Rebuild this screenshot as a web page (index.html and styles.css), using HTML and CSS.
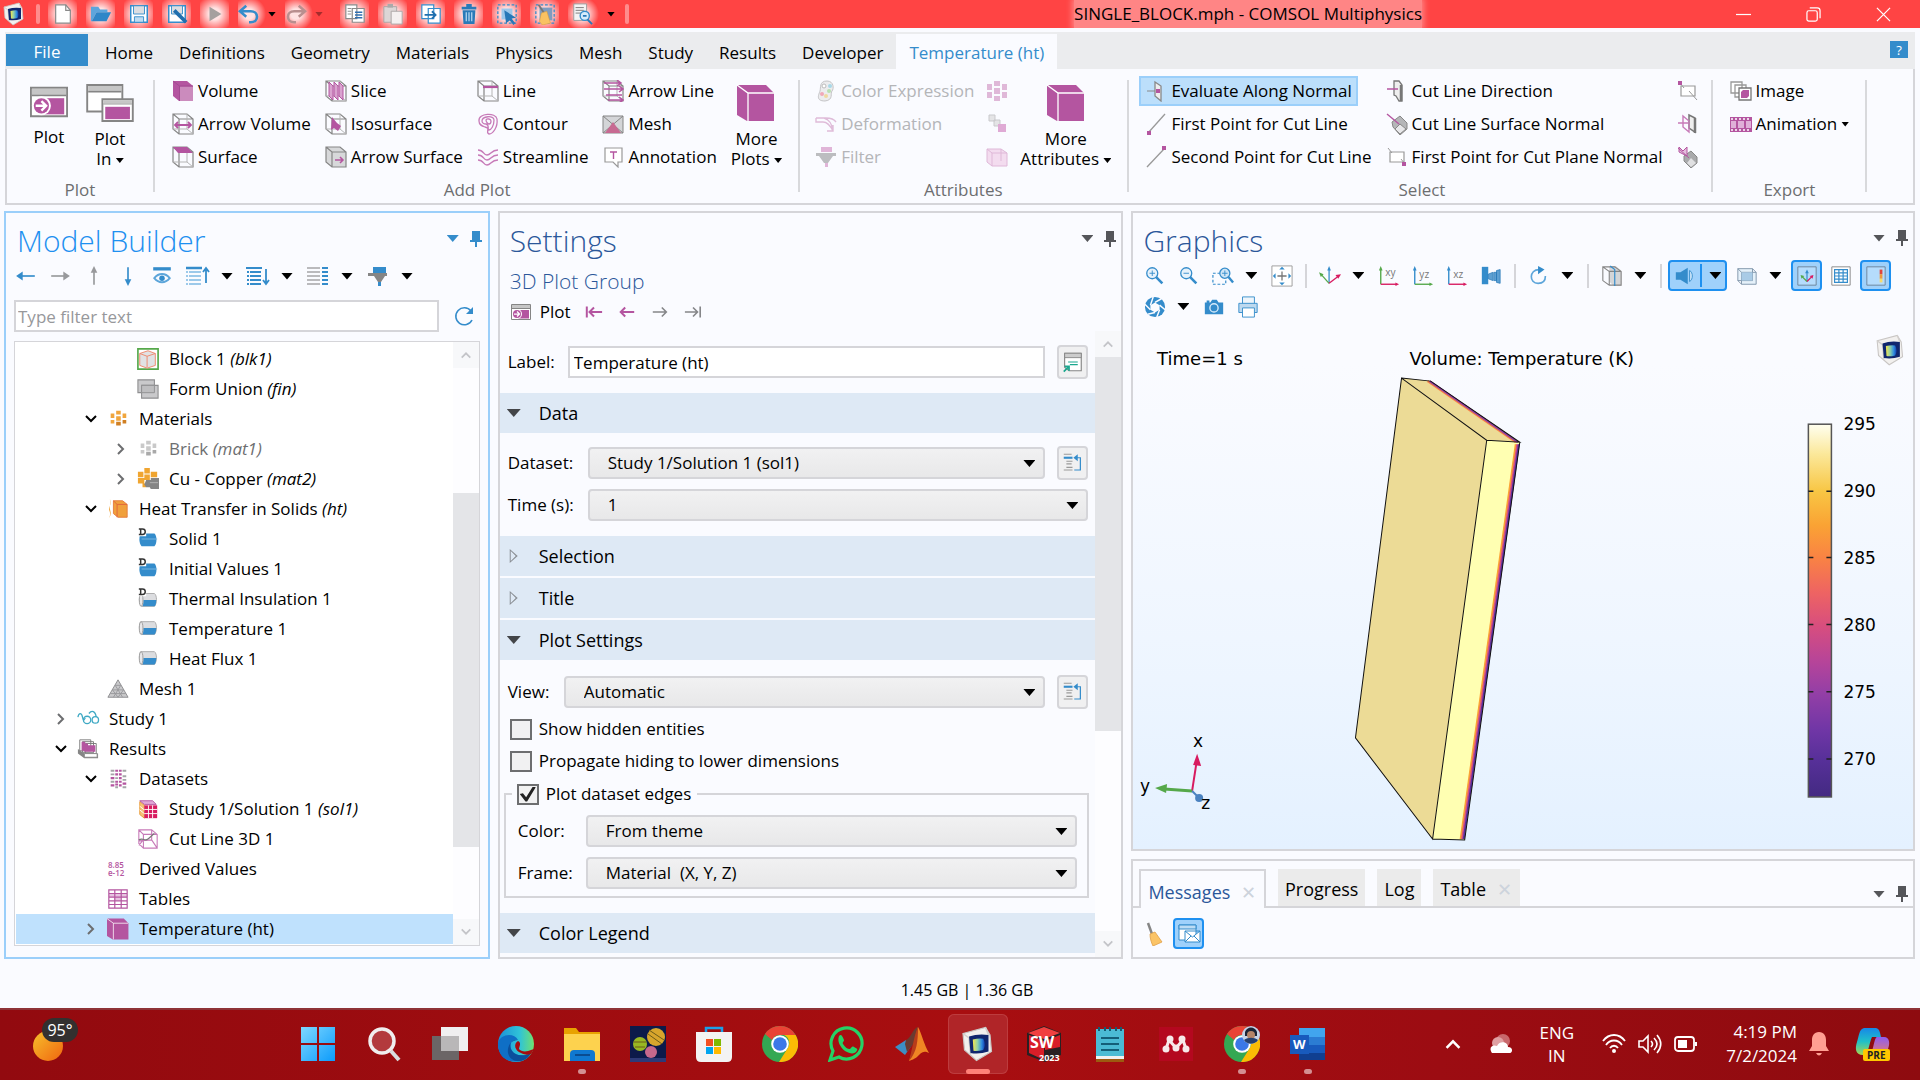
FILE: index.html
```html
<!DOCTYPE html>
<html lang="en">
<head>
    <meta charset="UTF-8">
    <meta name="viewport" content="width=device-width, initial-scale=1.0">
    <title>SINGLE_BLOCK.mph - COMSOL Multiphysics</title>
    <link rel="stylesheet" href="styles.css">
</head>
<body>
    <!-- Icon library -->
    <svg class="icon-defs" aria-hidden="true">
        <defs>
            <linearGradient id="g-screen" x1="0" y1="0" x2="1" y2="0"><stop offset="0" stop-color="#f6e64c"/><stop offset=".4" stop-color="#8fd0a8"/><stop offset=".75" stop-color="#2f8be0"/><stop offset="1" stop-color="#1240b0"/></linearGradient>
            <linearGradient id="g-win" x1="0" y1="0" x2="1" y2="1"><stop offset="0" stop-color="#7fd8ff"/><stop offset="1" stop-color="#0c9bfb"/></linearGradient>
            <linearGradient id="g-edge" x1="0" y1="0" x2="1" y2="0"><stop offset="0" stop-color="#1b8fd8"/><stop offset=".6" stop-color="#2fc3d8"/><stop offset="1" stop-color="#6fe070"/></linearGradient>
            <linearGradient id="g-sun" x1="0" y1="0" x2="1" y2="1"><stop offset="0" stop-color="#f7c02c"/><stop offset="1" stop-color="#f0660f"/></linearGradient>
            <linearGradient id="g-cop" x1="0" y1="0" x2="0" y2="1"><stop offset="0" stop-color="#1787e8"/><stop offset=".5" stop-color="#20c0c8"/><stop offset="1" stop-color="#a8d850"/></linearGradient>
            <linearGradient id="g-cop2" x1="0" y1="0" x2="0" y2="1"><stop offset="0" stop-color="#8f5cf0"/><stop offset="1" stop-color="#f08060"/></linearGradient>
        </defs>
        <symbol id="i-logo" viewBox="0 0 24 24"><path d="M2 5l15-4 3 5 1 11-10 6-8-7z" fill="#f2f0ee" stroke="#c9c6c4" stroke-width=".8"/><path d="M2 5l4 3 1 11M17 1l2 5" fill="none" stroke="#d2cfcd"/><path d="M6 7q6-2 13-1v11q-6 2-12 1z" fill="#10266e"/><path d="M8.500 9q4-1 7-.5 2 4 0 7.500-4 1-6.500.500z" fill="url(#g-screen)"/></symbol>
        <symbol id="i-new" viewBox="0 0 24 24"><path d="M4 2h11l5 6v14H4z" fill="#fff" stroke="#8a8a8a" stroke-width="1.300"/><path d="M15 2v6h5" fill="none" stroke="#8a8a8a" stroke-width="1.300"/></symbol>
        <symbol id="i-open" viewBox="0 0 24 24"><path d="M1 4h8l2 3h8v3H7l-5 10H1z" fill="#5da5dc"/><path d="M7 10h16l-5 10H2z" fill="#2f86c8"/></symbol>
        <symbol id="i-save" viewBox="0 0 24 24"><path d="M3 3h18v18H3z" fill="#fff" stroke="#348ccb" stroke-width="1.600"/><path d="M6 3h12v9H6z" fill="#dcdee2" stroke="#348ccb"/><path d="M7 15h10v6H7z" fill="#bfdcf2" stroke="#348ccb"/></symbol>
        <symbol id="i-saveas" viewBox="0 0 24 24"><path d="M3 3h18v18H3z" fill="#fff" stroke="#348ccb" stroke-width="1.600"/><path d="M6 3h12v9H6z" fill="#dcdee2" stroke="#348ccb"/><path d="M9 8l13 13" stroke="#1f6fae" stroke-width="4"/></symbol>
        <symbol id="i-run" viewBox="0 0 24 24"><path d="M6 4l13 8-13 8z" fill="#a5a09f"/></symbol>
        <symbol id="i-undo" viewBox="0 0 24 24"><path d="M9 3L2 9l7 6M3 9h11c9 0 9 12 0 12h-2" fill="none" stroke="#348ccb" stroke-width="2.800"/></symbol>
        <symbol id="i-redo" viewBox="0 0 24 24"><path d="M15 3l7 6-7 6M21 9H10c-9 0-9 12 0 12h2" fill="none" stroke="#b98f8f" stroke-width="2.800"/></symbol>
        <symbol id="i-copy" viewBox="0 0 24 24"><path d="M2 2h12v15H2zM9 6h13v15H9z" fill="#fff" stroke="#8a8a8a" stroke-width="1.300"/><path d="M4 6h4M4 9h4M4 12h4" stroke="#888"/><path d="M12 10h8M12 13h8M12 16h8" stroke="#2f6fb0" stroke-width="1.600"/></symbol>
        <symbol id="i-paste" viewBox="0 0 24 24"><path d="M2 4h14v17H2z" fill="#dcd6d6" stroke="#a9a3a3"/><path d="M6 1h6v4H6z" fill="#aaa"/><path d="M10 9h12v14H10z" fill="#f4f0f0" stroke="#a9a3a3"/></symbol>
        <symbol id="i-dup" viewBox="0 0 24 24"><path d="M2 2h13v15H2zM9 6h13v16H9z" fill="#fff" stroke="#348ccb" stroke-width="1.300"/><path d="M5 13h11M13 9l4 4-4 4" fill="none" stroke="#1f6fae" stroke-width="2"/></symbol>
        <symbol id="i-trash" viewBox="0 0 24 24"><path d="M4 4h16v3H4zM9 1h6v3H9zM5 8h14l-1 15H6z" fill="#2a7ab8"/><path d="M9 10v10M12 10v10M15 10v10" stroke="#bcdcf4" stroke-width="1.300"/></symbol>
        <symbol id="i-select" viewBox="0 0 24 24"><path d="M2 2h20v20H2z" fill="none" stroke="#348ccb" stroke-dasharray="3 2" stroke-width="1.400"/><path d="M6 6h12v12H6z" fill="#9cc7ea"/><path d="M9 8l13 8-5 1 4 5-2 2-4-5-4 3z" fill="#2878b8"/></symbol>
        <symbol id="i-clearsel" viewBox="0 0 24 24"><path d="M2 2h20v20H2z" fill="none" stroke="#348ccb" stroke-dasharray="3 2" stroke-width="1.400"/><path d="M6 5h14v14H6z" fill="#7f9cc0"/><path d="M5 2l6 9" stroke="#777" stroke-width="2"/><path d="M8 11l6-2 4 13-9 2-3-4z" fill="#f9c262" stroke="#d69a3c" stroke-width=".6"/></symbol>
        <symbol id="i-find" viewBox="0 0 24 24"><path d="M3 1h14v18H3z" fill="#f4f4f4" stroke="#999"/><path d="M5 5h9M5 8h9M5 11h6" stroke="#777"/><circle cx="15" cy="14" r="5" fill="#d6ebfb" stroke="#348ccb" stroke-width="1.500"/><path d="M13 14h4M18 18l5 5" stroke="#2878b8" stroke-width="2"/></symbol>

        <symbol id="i-plotwin" viewBox="0 0 40 32"><path d="M1 1h38v30H1z" fill="#fff" stroke="#858585" stroke-width="2"/><path d="M2 2h36v6H2z" fill="#c6c6c6"/><path d="M2 9h36" stroke="#858585" stroke-width="2"/><path d="M14 12h22v17H14z" fill="#b455a0"/><circle cx="12" cy="20" r="10" fill="#fff"/><circle cx="12" cy="20" r="8" fill="#b455a0"/><path d="M6 20h10M12 15l5 5-5 5" fill="none" stroke="#fff" stroke-width="2.500"/></symbol>
        <symbol id="i-plotin" viewBox="0 0 50 40"><path d="M1 1h37v28H1z" fill="#fff" stroke="#858585" stroke-width="2"/><path d="M2 2h35v5H2z" fill="#c6c6c6"/><path d="M2 8h35" stroke="#858585" stroke-width="2"/><path d="M17 16h32v23H17z" fill="#fff" stroke="#858585" stroke-width="2"/><path d="M18 17h30v3H18z" fill="#c6c6c6"/><path d="M18 21h30" stroke="#858585"/><path d="M20 24h26v13H20z" fill="#b455a0"/></symbol>
        <symbol id="i-bigcube" viewBox="0 0 40 38"><path d="M1 1h29l8 8v28H11L1 31z" fill="#b455a0"/><path d="M1 1l11 8h26M12 9v28" fill="none" stroke="#fff" stroke-width="1.300"/></symbol>
        <symbol id="i-volume" viewBox="0 0 22 22"><path d="M1 1h14l6 5v15H7l-6-5z" fill="#b455a0"/><path d="M8 6.500h13V21H8z" fill="#cb8bbd"/><path d="M1 1l6.500 5H21M7.500 6v15" fill="none" stroke="#a34a92"/></symbol>
        <symbol id="i-wire" viewBox="0 0 22 22"><path d="M1 1h14l6 5v15H7l-6-5zM1 1l6 5h14M7 6v15" fill="none" stroke="#858585" stroke-width="1.200"/><path d="M1 16h14l6 5M15 1v15" fill="none" stroke="#b5b5b5"/></symbol>
        <symbol id="i-arrowvol" viewBox="0 0 22 22"><use href="#i-wire"/><path d="M3 12h16M6 9l-3 3 3 3M16 9l3 3-3 3" fill="none" stroke="#b455a0" stroke-width="1.800"/></symbol>
        <symbol id="i-surface" viewBox="0 0 22 22"><use href="#i-wire"/><path d="M1 1h14l6 6H6z" fill="#b455a0"/></symbol>
        <symbol id="i-slice" viewBox="0 0 22 22"><use href="#i-wire"/><path d="M4 2l4 4v14l-4-4zM9 2l4 4v14l-4-4zM14 2l4 4v14l-4-4z" fill="#d9a3cf" stroke="#b455a0"/></symbol>
        <symbol id="i-iso" viewBox="0 0 22 22"><use href="#i-wire"/><path d="M7 4l5 6 4 3-3 5-4-3-3 2z" fill="#b455a0"/></symbol>
        <symbol id="i-arrowsurf" viewBox="0 0 22 22"><path d="M1 1h14l6 5v15H7l-6-5z" fill="#d7d8da"/><path d="M1 1h14l6 5v15H7l-6-5zM1 1l6 5h14M7 6v15" fill="none" stroke="#858585" stroke-width="1.200"/><path d="M10 14h8M15 11l3 3-3 3" fill="none" stroke="#b455a0" stroke-width="1.500"/></symbol>
        <symbol id="i-line" viewBox="0 0 22 22"><use href="#i-wire"/><path d="M6 7h15" stroke="#b455a0" stroke-width="2.200"/></symbol>
        <symbol id="i-contour" viewBox="0 0 22 22"><path d="M2 8C1 0 19-1 20 6c1 8-4 15-8 15-4-1 2-6-4-7-3-1-6-2-6-6zM5 8c0-5 12-6 12-1 0 6-3 10-5 10s1-5-3-6c-2 0-4-1-4-3zM9 7c1-2 5-1 5 1 0 3-1 3-2 3s-3-2-3-4z" fill="none" stroke="#c77ab8" stroke-width="1.300"/></symbol>
        <symbol id="i-stream" viewBox="0 0 22 22"><path d="M1 4c6 0 5 5 9 5s4-5 11-5M1 9c6 0 5 5 9 5s4-5 11-5M1 14c6 0 5 5 9 5s4-5 11-5" fill="none" stroke="#c77ab8" stroke-width="1.400"/></symbol>
        <symbol id="i-arrowline" viewBox="0 0 22 22"><use href="#i-wire"/><path d="M2 3h16M2 9h18M4 15h16M6 20h14M15 0l4 3-4 3M17 6l4 3-4 3M17 17l4 3-4 3" fill="none" stroke="#b455a0" stroke-width="1.500"/></symbol>
        <symbol id="i-meshplot" viewBox="0 0 22 22"><path d="M1 3h20v17H1z" fill="#d4d5d8" stroke="#858585"/><path d="M1 3l20 17M21 3L1 20" stroke="#858585"/><path d="M11 9L3 20h16z" fill="#c76a92"/></symbol>
        <symbol id="i-annot" viewBox="0 0 22 22"><path d="M3 2h17v14h-4v5l-5-5H3z" fill="#fff" stroke="#999" stroke-width="1.200"/><path d="M8 6h7M11.500 6v7" stroke="#b455a0" stroke-width="1.400"/></symbol>
        <symbol id="i-palette" viewBox="0 0 22 22"><path d="M12 1c7 0 7 8 5 10s2 9-7 10C0 21 4 14 5 11s-1-10 7-10z" fill="#ececee" stroke="#c4c4c6"/><circle cx="9" cy="6" r="2" fill="#fff" stroke="#bbb"/><circle cx="15" cy="6" r="2" fill="#a8d8e8"/><circle cx="14" cy="11" r="2" fill="#b8e0b0"/><circle cx="11" cy="16" r="2" fill="#f0d8a0"/><circle cx="7" cy="14" r="2" fill="#f0a8b8"/></symbol>
        <symbol id="i-deform" viewBox="0 0 22 22"><path d="M1 5h10c4 0 8 1 10 4M1 5v4h7c5 0 8 5 10 9M9 5c6 2 8 6 9 13M12 18h6v-6" fill="none" stroke="#dfbcd9" stroke-width="1.400"/></symbol>
        <symbol id="i-filter2" viewBox="0 0 22 22"><path d="M6 1h11v5H6z" fill="#e0b5d8"/><path d="M1 7h20v3h-3l-5 7H9L4 10H1z" fill="#bcbdc0"/><path d="M10 17h3v4h-3z" fill="#e0b5d8"/></symbol>
        <symbol id="i-bricks" viewBox="0 0 22 22"><path d="M1 4h5v6H1zM16 4h5v6h-5zM8 1h6v5H8zM8 8h6v6H8zM1 12h5v6H1zM16 12h5v6h-5zM8 16h6v5H8z" fill="#dfb8d8"/></symbol>
        <symbol id="i-cubes" viewBox="0 0 22 22"><path d="M3 2h6v6H3zM8 7h6v6H8z" fill="#e4e4e6" stroke="#c9c9cc"/><path d="M12 11h8v8h-8z" fill="#dfaad5"/></symbol>
        <symbol id="i-pinkbox" viewBox="0 0 22 22"><path d="M1 3h14l6 4v13H6l-5-4z" fill="#f3dcef" stroke="#dfb8d8"/><path d="M1 3l5 4h15M6 7v13M15 3v12" fill="none" stroke="#dfb8d8"/></symbol>
        <symbol id="i-evaln" viewBox="0 0 22 22"><path d="M10 2l6 4v15l-6-5z" fill="#eee" stroke="#888" stroke-width="1.300"/><path d="M2 11h8" stroke="#888"/><path d="M11 9h4v4h-4z" fill="#b455a0"/></symbol>
        <symbol id="i-first" viewBox="0 0 22 22"><path d="M3 20L20 1" stroke="#999" stroke-width="1.300"/><path d="M2 18h4v4H2z" fill="#b455a0"/></symbol>
        <symbol id="i-second" viewBox="0 0 22 22"><path d="M2 21L19 3" stroke="#999" stroke-width="1.300"/><path d="M17 0h4v4h-4z" fill="#b455a0"/></symbol>
        <symbol id="i-cutdir" viewBox="0 0 22 22"><path d="M8 1h5l3 4v16h-3l-3-5-2-1z" fill="#eee" stroke="#777" stroke-width="1.300"/><path d="M15 5v16" stroke="#777" stroke-width="2.500"/><path d="M1 9h11" stroke="#b455a0" stroke-width="1.500"/></symbol>
        <symbol id="i-cutnorm" viewBox="0 0 22 22"><path d="M6 9l8-6 7 7v6l-7 6-7-8z" fill="#b5b6b8" stroke="#888"/><path d="M14 11l6 5-6 5-5-5z" fill="#e8e8ea" stroke="#888"/><path d="M1 1l12 10" stroke="#b455a0" stroke-width="1.400"/></symbol>
        <symbol id="i-plane1" viewBox="0 0 22 22"><path d="M4 6h14v10H4z" fill="#fff" stroke="#999" stroke-width="1.200"/><path d="M2 2l4 5M15 13l4 5" stroke="#999"/><path d="M16 16h4v4h-4z" fill="#b455a0"/></symbol>
        <symbol id="i-plane2" viewBox="0 0 22 22"><path d="M4 6h14v10H4z" fill="#fff" stroke="#999" stroke-width="1.200"/><path d="M3 3l4 5M12 11l8 9" stroke="#999"/><path d="M1 1h4v4H1z" fill="#b455a0"/></symbol>
        <symbol id="i-planedir" viewBox="0 0 22 22"><path d="M12 2l6 3v14l-6-4z" fill="#eee" stroke="#777" stroke-width="1.500"/><path d="M18 5v15" stroke="#777" stroke-width="2.500"/><path d="M6 3l6 5v11l-6-5zM1 10h10" fill="none" stroke="#c77ab8" stroke-width="1.400"/></symbol>
        <symbol id="i-planenorm" viewBox="0 0 22 22"><path d="M7 10l7-5 6 6v6l-6 5-7-7z" fill="#a9aaac" stroke="#888"/><path d="M14 12l5 5-5 4-4-4z" fill="#e0e0e2"/><path d="M2 1l4 4 4-4v9L2 6zM1 2l11 10" fill="#e3bddc" stroke="#b455a0"/></symbol>
        <symbol id="i-image" viewBox="0 0 22 22"><path d="M1 2h11v11H1zM5 5h11v12H5z" fill="#fff" stroke="#999" stroke-width="1.300"/><path d="M9 8h12v12H9z" fill="#fff" stroke="#777" stroke-width="1.300"/><path d="M11 12l2-2h6v6l-2 2h-6z" fill="#b455a0"/></symbol>
        <symbol id="i-anim" viewBox="0 0 22 22"><path d="M0 4h22v15H0z" fill="#b455a0"/><path d="M1 8h5v7H1zM8 8h6v7H8zM16 8h5v7h-5z" fill="#e0b0d8"/><path d="M1 6h20M1 17h20" stroke="#fff" stroke-width="1.500" stroke-dasharray="2 2"/></symbol>

        <symbol id="i-left" viewBox="0 0 20 20"><path d="M4 10h14" stroke="currentColor" stroke-width="1.500"/><path d="M1 10l6-4v8z" fill="currentColor"/></symbol>
        <symbol id="i-right" viewBox="0 0 20 20"><path d="M2 10h14" stroke="currentColor" stroke-width="1.500"/><path d="M19 10l-6-4v8z" fill="currentColor"/></symbol>
        <symbol id="i-up" viewBox="0 0 20 20"><path d="M10 18V4" stroke="currentColor" stroke-width="1.500"/><path d="M10 1l3 6H7z" fill="currentColor"/></symbol>
        <symbol id="i-down" viewBox="0 0 20 20"><path d="M10 2v14" stroke="currentColor" stroke-width="1.500"/><path d="M10 19l3-6H7z" fill="currentColor"/></symbol>
        <symbol id="i-prev" viewBox="0 0 20 20"><path d="M3 10h15M8 5l-5 5 5 5" fill="none" stroke="currentColor" stroke-width="2.200"/></symbol>
        <symbol id="i-next" viewBox="0 0 20 20"><path d="M2 10h15M12 5l5 5-5 5" fill="none" stroke="currentColor" stroke-width="1.800"/></symbol>
        <symbol id="i-first-arr" viewBox="0 0 20 20"><path d="M2 4v12M5 10h14M10 5l-5 5 5 5" fill="none" stroke="currentColor" stroke-width="2.200"/></symbol>
        <symbol id="i-last-arr" viewBox="0 0 20 20"><path d="M18 4v12M1 10h14M10 5l5 5-5 5" fill="none" stroke="currentColor" stroke-width="1.800"/></symbol>
        <symbol id="i-eye" viewBox="0 0 20 20"><path d="M2 2h16v3H2z" fill="#348ccb"/><path d="M3 12c4-5 10-5 14 0-4 5-10 5-14 0z" fill="none" stroke="#5ca5da" stroke-width="1.800"/><circle cx="10" cy="12" r="2.500" fill="#348ccb"/></symbol>
        <symbol id="i-listup" viewBox="0 0 26 20"><path d="M1 2h16" stroke="#348ccb" stroke-width="2.500"/><path d="M4 6h12M4 10h12M4 14h12M4 18h12" stroke="#9cc9ea" stroke-width="2"/><path d="M1 6h2M1 10h2M1 14h2M1 18h2" stroke="#9cc9ea" stroke-width="2"/><path d="M21 17V2M18 6l3-4 3 4" fill="none" stroke="#348ccb" stroke-width="1.800"/></symbol>
        <symbol id="i-listdown" viewBox="0 0 26 20"><path d="M1 2h16M5 6h11M5 10h11M5 14h11M5 18h11M2 6h2M2 10h2M2 14h2M2 18h2" stroke="#348ccb" stroke-width="2"/><path d="M21 3v15M18 14l3 4 3-4" fill="none" stroke="#348ccb" stroke-width="1.800"/></symbol>
        <symbol id="i-listcols" viewBox="0 0 26 20"><path d="M2 2h13M2 6h13M2 10h13M2 14h13M2 18h13" stroke="#a5a5a8" stroke-width="1.500"/><path d="M17 2h6M17 6h6M17 10h6M17 14h6M17 18h6" stroke="#348ccb" stroke-width="2"/></symbol>
        <symbol id="i-funnel" viewBox="0 0 22 20"><path d="M6 1h13v6H6z" fill="#348ccb"/><path d="M1 7h19v3h-2l-4 6h-3l-4-6H1z" fill="#858585"/><path d="M11 16h3v4h-3z" fill="#348ccb"/></symbol>
        <symbol id="i-refresh" viewBox="0 0 22 22"><path d="M18 6a8.500 8.500 0 1 0 1 9" fill="none" stroke="#348ccb" stroke-width="1.600"/><path d="M20 2v7h-7z" fill="#348ccb"/></symbol>
        <symbol id="i-pin" viewBox="0 0 12 18"><path d="M2 1h8v9h2v2H7v5H5v-5H0v-2h2z" fill="currentColor"/></symbol>
        <symbol id="i-cv-down" viewBox="0 0 14 14"><path d="M2 4l5 5 5-5" fill="none" stroke="currentColor" stroke-width="2"/></symbol>
        <symbol id="i-cv-right" viewBox="0 0 14 14"><path d="M4 2l5 5-5 5" fill="none" stroke="currentColor" stroke-width="2"/></symbol>
        <symbol id="i-cv-up" viewBox="0 0 14 14"><path d="M2 10l5-5 5 5" fill="none" stroke="currentColor" stroke-width="2"/></symbol>

        <symbol id="i-block" viewBox="0 0 24 24"><path d="M1 1h22v22H1z" fill="#fff" stroke="#55a84a" stroke-width="1.800"/><path d="M3 6l9-3 8 3v13l-9 3-8-3z" fill="#e1e2e4" stroke="#f08468"/><path d="M3 6l8 3 9-3M11 9v12" fill="none" stroke="#f08468"/></symbol>
        <symbol id="i-union" viewBox="0 0 24 24"><path d="M1 2h18v14H1z" fill="#c9c9cb" stroke="#8f8f91" stroke-width="1.200"/><path d="M5 8h18v14H5z" fill="#c9c9cb" stroke="#8f8f91" stroke-width="1.200"/><path d="M5 8h14v8H5z" fill="#bebec0" stroke="#8f8f91"/></symbol>
        <symbol id="i-mats" viewBox="0 0 24 24"><path d="M4 6h4v5H4zM10 3h5v4h-5zM10 9h5v5h-5zM17 6h4v5h-4zM4 13h4v4H4z" fill="#f0a53c"/><path d="M10 15h5v4h-5zM17 13h4v4h-4z" fill="#d07f22"/></symbol>
        <symbol id="i-brick" viewBox="0 0 24 24"><path d="M4 6h4v5H4zM10 3h5v4h-5zM17 6h4v5h-4zM4 13h4v4H4zM10 9h5v5h-5z" fill="#c9c9c9"/><path d="M10 15h5v4h-5zM17 13h4v4h-4z" fill="#a9a9a9"/></symbol>
        <symbol id="i-copper" viewBox="0 0 24 24"><path d="M1 4h6v6H1zM8 0h6v6H8zM15 4h7v6h-7zM8 7h6v6H8zM1 11h7v6H1zM6 17h4v4H6z" fill="#f0a530"/><path d="M10 13h5v-2h9v12h-9l-1-2h-4l-2-3z" fill="#858585"/><path d="M14 16h9" stroke="#b5b5b5"/></symbol>
        <symbol id="i-heat" viewBox="0 0 24 24"><path d="M3 1c4 6-3 8 0 14 1 3 0 5-1 7 4-5 1-8 1-12 0-3 2-5 0-9z" fill="#f0a53c"/><path d="M7 3h10l5 4v14H12l-5-4z" fill="#f0a03c" stroke="#e57a3a"/><path d="M7 3l4 4h11M11 7v14" fill="none" stroke="#e0643c"/></symbol>
        <symbol id="i-dom" viewBox="0 0 24 24"><path d="M4 6h15c3 2 3 11 0 14H5C2 17 2 9 4 6z" fill="#348ccb"/><path d="M5 12h17" stroke="#7db9e2"/><path d="M1 0h9v9H1z" fill="#fff"/><path d="M2 1h4c4 0 4 6 0 6H2M4 1v6" fill="none" stroke="#333" stroke-width="1.600"/></symbol>
        <symbol id="i-bnd" viewBox="0 0 24 24"><path d="M4 4h15c3 2 3 11 0 14H5C2 15 2 7 4 4z" fill="#dcdde0" stroke="#a8a8aa"/><path d="M7 11h14c0 4-1 7-2 7H6c1-2 1-5 1-7z" fill="#348ccb"/><ellipse cx="4.500" cy="11" rx="2" ry="7" fill="#e8e8ea" stroke="#999"/></symbol>
        <symbol id="i-bndd" viewBox="0 0 24 24"><use href="#i-bnd" y="2"/><path d="M1 0h9v9H1z" fill="#fff"/><path d="M2 1h4c4 0 4 6 0 6H2M4 1v6" fill="none" stroke="#333" stroke-width="1.600"/></symbol>
        <symbol id="i-mesh" viewBox="0 0 24 24"><path d="M12 2L1 21h22z" fill="#c9c9cb" stroke="#8a8a8c"/><path d="M9 8h6M6 13h12M3.500 17h17M9 8l8 13M15 8L7 21M6 13l6 8M18 13l-6 8" fill="none" stroke="#97979a"/></symbol>
        <symbol id="i-study" viewBox="0 0 24 24"><path d="M1 10c1-5 4-5 5 0s2 3 3 1M13 6c3-4 7-3 8 4" fill="none" stroke="#3fa9c4" stroke-width="1.400"/><circle cx="11" cy="13" r="4" fill="none" stroke="#3fa9c4" stroke-width="1.400"/><circle cx="20" cy="13" r="3.500" fill="none" stroke="#3fa9c4" stroke-width="1.400"/></symbol>
        <symbol id="i-results" viewBox="0 0 24 24"><path d="M3 2h12v12H3zM6 4h12v12H6zM9 6h12v11H9z" fill="#fff" stroke="#777"/><path d="M5 4h4v10H5zM8 6h4v9H8zM11 8h9v7h-9z" fill="#b455a0"/><path d="M1 12l7 5h15v5H8l-7-5z" fill="#858585"/><path d="M8 17h14v4H8z" fill="#fff" stroke="#858585"/></symbol>
        <symbol id="i-datasets" viewBox="0 0 24 24"><path d="M4 3h4M17 3h4M4 7h4M17 9h4M4 15h4M17 13h4M9 21h3M17 21h4M9 11h3" stroke="#a5a5a8" stroke-width="2"/><path d="M9 3h3M13 3h3M9 7h3M13 7h3M4 11h4M13 11h3M9 15h3M13 15h3M4 19h4M9 18h3M13 19h3M17 17h4" stroke="#b455a0" stroke-width="2.400"/></symbol>
        <symbol id="i-solution" viewBox="0 0 24 24"><path d="M3 4l5 4v14l-5-4z" fill="#f6c27a" stroke="#e89b38"/><path d="M3 3h14l4 4H8z" fill="#e0a8d8" stroke="#b455a0"/><path d="M8 8h14v14H8z" fill="#d81b60"/><path d="M12.500 8v14M17 8v14M8 12.500h14M8 17h14M3 9l5 4M3 13l5 4" stroke="#fff"/></symbol>
        <symbol id="i-cutline" viewBox="0 0 24 24"><path d="M2 2h14l6 5v15H7l-5-5zM16 2v11M7 7v15M2 2l5 5h15M2 14l14-1 6 9M7 7l-5-5M6 14l-4 5" fill="none" stroke="#c77ab8" stroke-width="1.200"/><path d="M2 13c5-3 6 2 10-1s4-4 7-6" fill="none" stroke="#777" stroke-width="1.400"/></symbol>
        <symbol id="i-tables" viewBox="0 0 24 24"><path d="M2 2h20v20H2z" fill="#fff"/><path d="M2 6h20v4H2zM8 10h7v4H8z" fill="#e6c3e0"/><path d="M2 2h20v20H2zM2 6h20M2 10h20M2 14h20M2 18h20M8.500 2v20M15.500 2v20" fill="none" stroke="#b455a0" stroke-width="1.300"/></symbol>

        <symbol id="i-rename" viewBox="0 0 24 24"><path d="M3 2h19v20H8l-5-4z" fill="#fff" stroke="#858585" stroke-width="1.300"/><path d="M3 2h19v5H3z" fill="#ccc" stroke="#858585"/><path d="M7 12h11M9 15h9" stroke="#1aa88f" stroke-width="1.400"/><path d="M2 23l6-6M3 17h5v5" fill="none" stroke="#1aa88f" stroke-width="2"/></symbol>
        <symbol id="i-goto" viewBox="0 0 24 24"><path d="M2 2h9M5 10h7M5 13h6M2 20h10M5 17h7" stroke="#999" stroke-width="1.300"/><path d="M2 6h10" stroke="#348ccb" stroke-width="2.400"/><path d="M16 6h5v14h-7" fill="none" stroke="#348ccb" stroke-width="1.400"/><path d="M13 6l5-4v8z" fill="#348ccb"/></symbol>

        <symbol id="i-zoomin" viewBox="0 0 24 24"><circle cx="9" cy="9" r="6" fill="#e7f2fb" stroke="#348ccb" stroke-width="1.400"/><path d="M6 9h6M9 6v6" stroke="#348ccb"/><path d="M13 13l7 7" stroke="#348ccb" stroke-width="2.800"/></symbol>
        <symbol id="i-zoomout" viewBox="0 0 24 24"><circle cx="9" cy="9" r="6" fill="#e7f2fb" stroke="#348ccb" stroke-width="1.400"/><path d="M6 9h6" stroke="#348ccb"/><path d="M13 13l7 7" stroke="#348ccb" stroke-width="2.800"/></symbol>
        <symbol id="i-zoombox" viewBox="0 0 24 24"><path d="M9 9H1v12h14v-4" fill="none" stroke="#348ccb" stroke-dasharray="3 2" stroke-width="1.300"/><circle cx="14" cy="9" r="5.500" fill="#cfe5f6" stroke="#348ccb" stroke-width="1.400"/><path d="M11 9h6M14 6v6" stroke="#348ccb"/><path d="M18 13l5 6" stroke="#348ccb" stroke-width="2.600"/></symbol>
        <symbol id="i-extents" viewBox="0 0 24 24"><path d="M1 1h22v22H1z" fill="#fff" stroke="#999"/><path d="M12 7v10M7 12h10" stroke="#777" stroke-width="1.400"/><path d="M12 2l3 3H9zM12 22l3-3H9zM2 12l3-3v6zM22 12l-3-3v6z" fill="#348ccb"/></symbol>
        <symbol id="i-axes" viewBox="0 0 24 24"><path d="M11 20V4" stroke="#348ccb" stroke-width="1.400"/><path d="M11 1l2 5H9z" fill="#348ccb"/><path d="M11 20L3 11" stroke="#55a84a" stroke-width="1.400"/><path d="M0 8l5 2-3 3z" fill="#55a84a"/><path d="M11 20l9-7" stroke="#d81b60" stroke-width="1.400"/><path d="M24 10l-3 5-3-4z" fill="#d81b60"/></symbol>
        <symbol id="i-xy" viewBox="0 0 24 24"><path d="M3 21V4" stroke="#55a84a" stroke-width="1.500"/><path d="M3 1l2 5H1z" fill="#55a84a"/><path d="M3 21h17" stroke="#d81b60" stroke-width="1.500"/><path d="M23 21l-4-2v4z" fill="#d81b60"/></symbol>
        <symbol id="i-yz" viewBox="0 0 24 24"><path d="M3 21V4" stroke="#348ccb" stroke-width="1.500"/><path d="M3 1l2 5H1z" fill="#348ccb"/><path d="M3 21h17" stroke="#55a84a" stroke-width="1.500"/><path d="M23 21l-4-2v4z" fill="#55a84a"/></symbol>
        <symbol id="i-xz" viewBox="0 0 24 24"><path d="M3 21V4" stroke="#348ccb" stroke-width="1.500"/><path d="M3 1l2 5H1z" fill="#348ccb"/><path d="M3 21h17" stroke="#d81b60" stroke-width="1.500"/><path d="M23 21l-4-2v4z" fill="#d81b60"/></symbol>
        <symbol id="i-cam" viewBox="0 0 24 24"><path d="M2 2h7v19H2z" fill="#348ccb"/><path d="M9 10l5-2v9l-5-2zM15 8h3v9h-3zM18 6l4-1v15l-4-1z" fill="#5c9fd2" stroke="#2878b8" stroke-width=".8"/></symbol>
        <symbol id="i-rot" viewBox="0 0 24 24"><path d="M12 5c-11 0-11 15-1 15 5 0 8-3 8-8" fill="none" stroke="#5ca5da" stroke-width="1.800"/><path d="M11 1l7 4-7 5z" fill="#348ccb"/></symbol>
        <symbol id="i-clip" viewBox="0 0 24 24"><path d="M9 1h7l6 5v17h-8l-5-5z" fill="#d4d5d7"/><path d="M2 2h13l7 5v15H9l-7-5zM2 2l7 5h13M9 7v15" fill="none" stroke="#858585" stroke-width="1.200"/><path d="M10 1l5 4v18" fill="none" stroke="#348ccb" stroke-width="1.300"/></symbol>
        <symbol id="i-light" viewBox="0 0 24 24"><path d="M2 8h5l8-5v18l-8-5H2z" fill="#348ccb"/><path d="M17 6c4 2 4 10 0 12z" fill="#cfe7fa" stroke="#348ccb"/></symbol>
        <symbol id="i-transp" viewBox="0 0 24 24"><path d="M2 4h16v13H2zM6 8h16v13H6z" fill="#dcecf8" fill-opacity=".7" stroke="#7d93a8"/><path d="M2 4l4 4M18 4l4 4M2 17l4 4" stroke="#7d93a8"/><path d="M6 8h12v9H6z" fill="#a9cbe6"/></symbol>
        <symbol id="i-axbox" viewBox="0 0 24 24"><path d="M2 2h20v20H2z" fill="#b5dcfc" stroke="#6a8298"/><path d="M12 18V8" stroke="#348ccb" stroke-width="1.300"/><path d="M12 5l2 4h-4z" fill="#348ccb"/><path d="M12 18l-5-5" stroke="#55a84a" stroke-width="1.400"/><path d="M5 11l4 1-3 3z" fill="#55a84a"/><path d="M12 18l5-5" stroke="#d81b60" stroke-width="1.400"/><path d="M19 11l-4 1 3 3z" fill="#d81b60"/></symbol>
        <symbol id="i-grid" viewBox="0 0 24 24"><path d="M2 2h20v20H2z" fill="#fff" stroke="#858585"/><path d="M5 5h14v14H5zM9.700 5v14M14.300 5v14M5 8.500h14M5 12h14M5 15.500h14" fill="none" stroke="#348ccb" stroke-width="1.300"/></symbol>
        <symbol id="i-legend" viewBox="0 0 24 24"><path d="M2 2h20v20H2z" fill="#b5dcfc" stroke="#6a8298"/><path d="M16 5h3v5h-3z" fill="#e0453c"/><path d="M16 10h3v5h-3z" fill="#f09a3c"/><path d="M16 15h3v4h-3z" fill="#f7dc6a"/></symbol>
        <symbol id="i-shutter" viewBox="0 0 24 24"><circle cx="12" cy="12" r="11" fill="#348ccb"/><path d="M12 7l5 3v5l-5 3-5-3v-5z" fill="#fafbff"/><path d="M12 7l7-4M17 10l6 5M17 15l-3 8M12 18l-8 2M7 15L1 9M7 10l3-9" stroke="#fafbff" stroke-width="1.600"/></symbol>
        <symbol id="i-camera" viewBox="0 0 24 24"><path d="M2 7h6l2-3h5l2 3h5v13H2zM4 5h3v2H4z" fill="#348ccb"/><circle cx="12" cy="13" r="4.500" fill="#348ccb" stroke="#d6ebfb" stroke-width="1.500"/></symbol>
        <symbol id="i-print" viewBox="0 0 24 24"><path d="M6 1h13v8H6z" fill="#eef5fb" stroke="#348ccb"/><path d="M2 8h20v10H2z" fill="#bdd9ef" stroke="#348ccb"/><path d="M6 13h13v10H6z" fill="#fff" stroke="#348ccb"/></symbol>
        <symbol id="i-broom" viewBox="0 0 24 24"><path d="M6 1l4 11" stroke="#858585" stroke-width="2.500"/><path d="M8 12l5-2 7 10-9 4c-2-4-3-8-3-12z" fill="#fbc467" stroke="#e0a048" stroke-width=".8"/></symbol>
        <symbol id="i-mail" viewBox="0 0 24 24"><path d="M2 3h17v15H2z" fill="#fff" stroke="#348ccb"/><path d="M2 3h17v4H2z" fill="#bcdcf4" stroke="#348ccb"/><path d="M8 9h15v11H8zM8 9l7.500 6L23 9M8 20l6-6M23 20l-6-6" fill="#fff" stroke="#348ccb"/></symbol>

        <!-- Taskbar icons -->
        <symbol id="t-win" viewBox="0 0 36 36"><path d="M1 1h16v16H1zM19 1h16v16H19zM1 19h16v16H1zM19 19h16v16H19z" fill="url(#g-win)"/></symbol>
        <symbol id="t-search" viewBox="0 0 36 36"><circle cx="16" cy="15" r="12" fill="#b33a3d" stroke="#f0eeee" stroke-width="3.500"/><path d="M25 25l8 9" stroke="#d9dde0" stroke-width="4"/></symbol>
        <symbol id="t-views" viewBox="0 0 36 36"><path d="M0 10h27v24H0z" fill="#6b6566"/><path d="M9 1h27v24H9z" fill="#f0eff0"/><path d="M9 10h18v15H9z" fill="#b9b7b8"/></symbol>
        <symbol id="t-edge" viewBox="0 0 36 36"><circle cx="18" cy="18" r="18" fill="url(#g-edge)"/><path d="M0 17c2-9 16-11 20-3-6-1-9 4-7 9 2 7 13 8 20 4-9 14-34 11-33-10z" fill="#0f6fc6"/><path d="M20 14c-6-1-9 4-7 9 3 7 13 8 20 4-6 12-21 10-23 0-1-7 3-13 10-13z" fill="#0b4f9c"/><path d="M20 15c4 2 1 6 1 8 2 3 8 3 12 1l3-1-3 5c-4 1-6 1-10-1-6-2-8-9-3-12z" fill="#a50d10"/></symbol>
        <symbol id="t-folder" viewBox="0 0 36 36"><path d="M0 2h12l3 4h21v29H0z" fill="#e8a200"/><path d="M0 8h36v27H0z" fill="#fdd24e"/><path d="M6 35V28q0-4 4-4h17q4 0 4 4v7z" fill="#0f78d0"/><path d="M11 29h15" stroke="#0a4c90" stroke-width="2"/></symbol>
        <symbol id="t-photo" viewBox="0 0 36 36"><path d="M0 0h36v36H0z" fill="#0c1a4a"/><circle cx="26" cy="11" r="9" fill="#d8a52c"/><circle cx="10" cy="18" r="7" fill="#98b823"/><circle cx="21" cy="26" r="6" fill="#c7688c"/><path d="M18 8l14 10M19 4l15 10M4 16h12M5 21h10" stroke="#6c5a18"/><path d="M0 32h36v4H0z" fill="#2d3a78"/></symbol>
        <symbol id="t-store" viewBox="0 0 36 36"><path d="M10 7V2h16v5" fill="none" stroke="#1ba0e8" stroke-width="2.500"/><path d="M0 6h36v25q0 5-5 5H5q-5 0-5-5z" fill="#f3f3f3"/><path d="M10 13h7v7h-7z" fill="#f25022"/><path d="M18 13h7v7h-7z" fill="#7fba00"/><path d="M10 21h7v7h-7z" fill="#00a4ef"/><path d="M18 21h7v7h-7z" fill="#ffb900"/></symbol>
        <symbol id="t-chrome" viewBox="0 0 36 36"><circle cx="18" cy="18" r="18" fill="#34a853"/><path d="M18 0a18 18 0 0 1 15.600 9H18a9 9 0 0 0-8 5L3 8A18 18 0 0 1 18 0z" fill="#ea4335"/><path d="M33.600 9A18 18 0 0 1 17 36l8.500-13.500A9 9 0 0 0 22 9z" fill="#fbbc05"/><circle cx="18" cy="18" r="8.800" fill="#fff"/><circle cx="18" cy="18" r="6.800" fill="#3b78e7"/></symbol>
        <symbol id="t-wa" viewBox="0 0 36 36"><path d="M2 34l3-9A15.500 15.500 0 1 1 11 31z" fill="none" stroke="#25d366" stroke-width="3.200"/><path d="M11 10c2-2 3-1 5 4 0 2-2 2-1 4 2 3 4 5 7 5 2-2 2-3 4-2 4 2 4 2 2 5-2 2-6 2-11-1-5-4-8-10-6-15z" fill="#25d366"/></symbol>
        <symbol id="t-matlab" viewBox="0 0 36 36"><path d="M1 21l11-7 6 5-7 10z" fill="#3d8ec4"/><path d="M12 14c5-2 7-12 12-13l-4 16-7 9-2-8z" fill="#6a3a30"/><path d="M24 1c4 7 6 18 11 26-6-3-8 0-12 4-4 3-4 2-8 4 4-10 6-22 9-34z" fill="#f08524"/><path d="M24 1c-4 8-6 24-9 34 8-9 9-20 9-34z" fill="#b83c1a"/></symbol>
        <symbol id="t-sw" viewBox="0 0 36 36"><path d="M1 7L18 0l17 7v22l-16 7L1 29z" fill="#2a2022"/><path d="M2 7l16-6 16 6-16 6z" fill="#f04040"/><path d="M3 9l15 6v19L3 27zM34 9l-15 6v9l15-3z" fill="#d81e28"/></symbol>
        <symbol id="t-note" viewBox="0 0 36 36"><path d="M4 30h28v6H4z" fill="#9c5a10"/><path d="M4 3h28v28H4z" fill="#4bbbd4"/><path d="M4 30h28v3H4z" fill="#f0f0f0"/><path d="M9 12h18M9 18h18M9 24h18" stroke="#145f78" stroke-width="2.200"/><path d="M7 1v4M13 1v4M18 1v4M24 1v4M29 1v4" stroke="#165a72" stroke-width="2"/></symbol>
        <symbol id="t-mend" viewBox="0 0 36 36"><path d="M1 1h34v34H1z" fill="#b4081f"/><path d="M8 23l3-9 7 8 7-8 3 9" fill="none" stroke="#f7e8ea" stroke-width="3"/><circle cx="12" cy="13" r="3.500" fill="#f7e8ea"/><circle cx="24" cy="13" r="3.500" fill="#f7e8ea"/><circle cx="8" cy="23" r="3.500" fill="#f7e8ea"/><circle cx="18" cy="22" r="3.500" fill="#f7e8ea"/><circle cx="28" cy="23" r="3.500" fill="#f7e8ea"/></symbol>
        <symbol id="t-chromeuser" viewBox="0 0 36 36"><use href="#t-chrome"/><circle cx="27" cy="9" r="9" fill="#c6d3e8"/><path d="M21 6c2-6 10-6 12 0v4H21z" fill="#1b2436"/><circle cx="27" cy="9" r="4" fill="#b58468"/><path d="M20 14c4-3 10-3 14 0-3 5-11 5-14 0z" fill="#26406e"/></symbol>
        <symbol id="t-word" viewBox="0 0 36 36"><path d="M9 2h26v9H9z" fill="#41a5ee"/><path d="M9 11h26v8H9z" fill="#2b7cd3"/><path d="M9 19h26v8H9z" fill="#185abd"/><path d="M9 27h26v7H9z" fill="#103f91"/><path d="M0 9h19v19H0z" fill="#185abd"/></symbol>
        <symbol id="t-cloud" viewBox="0 0 24 24"><circle cx="14" cy="9" r="7" fill="#c8686b"/><circle cx="9" cy="11" r="6" fill="#dfa0a2"/><path d="M3 21c-4-6 1-9 5-7 3-6 11-4 11 1 5 0 5 5 2 6z" fill="#fff"/></symbol>
        <symbol id="t-wifi" viewBox="0 0 24 24"><path d="M1 9c6-8 16-8 22 0M4 13c4-6 12-6 16 0M8 16c2-3 6-3 8 0" fill="none" stroke="#fff" stroke-width="1.800"/><circle cx="12" cy="19" r="2" fill="#fff"/></symbol>
        <symbol id="t-vol" viewBox="0 0 24 24"><path d="M1 9h4l5-5v16l-5-5H1zM13 9c2 2 2 4 0 6M16 6c4 4 4 8 0 12M19 3c5 6 5 12 0 18" fill="none" stroke="#fff" stroke-width="1.600"/></symbol>
        <symbol id="t-bat" viewBox="0 0 24 24"><rect x="1" y="5" width="19" height="14" rx="3" fill="none" stroke="#fff" stroke-width="1.800"/><path d="M4 8h9v8H4z" fill="#fff"/><path d="M22 10v4" stroke="#fff" stroke-width="2"/></symbol>
        <symbol id="t-bell" viewBox="0 0 24 24"><path d="M12 0c5 0 7 4 7 8v6l3 5H2l3-5V8c0-4 2-8 7-8zM9 21h6q-3 5-6 0z" fill="#ff9f92"/></symbol>
        <symbol id="t-copilot" viewBox="0 0 36 36"><path d="M9 2h12c4 1 4 5 5 9h-9c-3 6-3 18-9 18C0 29 0 22 2 16 4 10 4 3 9 2z" fill="url(#g-cop)"/><path d="M22 11h7c6 0 6 7 4 12s-3 8-8 8H14c4-2 5-20 8-20z" fill="url(#g-cop2)"/><rect x="8" y="23" width="27" height="12" rx="2" fill="#ffc800"/></symbol>
    </svg>

    <header class="titlebar">
        <svg class="ico"><use href="#i-logo"/></svg>
        <span class="title-sep"></span>
        <div class="quick">
            <button aria-label="New"><svg class="ico"><use href="#i-new"/></svg></button>
            <button aria-label="Open"><svg class="ico"><use href="#i-open"/></svg></button>
            <button aria-label="Save"><svg class="ico"><use href="#i-save"/></svg></button>
            <button aria-label="Save As"><svg class="ico"><use href="#i-saveas"/></svg></button>
            <button aria-label="Run"><svg class="ico"><use href="#i-run"/></svg></button>
            <button class="split" aria-label="Undo"><svg class="ico"><use href="#i-undo"/></svg><i class="tri"></i></button>
            <button class="split" aria-label="Redo"><svg class="ico"><use href="#i-redo"/></svg><i class="tri tri-dim"></i></button>
        </div>
        <div class="quick quick-edit">
            <button aria-label="Copy"><svg class="ico"><use href="#i-copy"/></svg></button>
            <button aria-label="Paste"><svg class="ico"><use href="#i-paste"/></svg></button>
            <button aria-label="Duplicate"><svg class="ico"><use href="#i-dup"/></svg></button>
            <button aria-label="Delete"><svg class="ico"><use href="#i-trash"/></svg></button>
            <button aria-label="Select"><svg class="ico"><use href="#i-select"/></svg></button>
            <button aria-label="Clear Selection"><svg class="ico"><use href="#i-clearsel"/></svg></button>
            <button class="split" aria-label="Find"><svg class="ico"><use href="#i-find"/></svg><i class="tri"></i></button>
        </div>
        <span class="title-sep"></span>
        <span class="title-text">SINGLE_BLOCK.mph - COMSOL Multiphysics</span>
        <div class="win-controls">
            <button aria-label="Minimize"><svg viewBox="0 0 16 16"><path d="M0 8h16"/></svg></button>
            <button aria-label="Restore"><svg viewBox="0 0 16 16"><rect x="1" y="4" width="11" height="11" rx="2"/><path d="M4 1h8q3 0 3 3v8"/></svg></button>
            <button aria-label="Close"><svg viewBox="0 0 16 16"><path d="M1 1l14 14M15 1L1 15"/></svg></button>
        </div>
    </header>

    <nav class="tabs">
        <button class="tab tab-file">File</button>
        <button class="tab">Home</button>
        <button class="tab">Definitions</button>
        <button class="tab">Geometry</button>
        <button class="tab">Materials</button>
        <button class="tab">Physics</button>
        <button class="tab">Mesh</button>
        <button class="tab">Study</button>
        <button class="tab">Results</button>
        <button class="tab">Developer</button>
        <button class="tab tab-active">Temperature (ht)</button>
        <button class="help" aria-label="Help">?</button>
    </nav>

    <section class="ribbon">
        <div class="group group-plot">
            <div class="group-body">
                <button class="big"><svg class="big-plot"><use href="#i-plotwin"/></svg><span>Plot</span></button>
                <button class="big"><svg class="big-plotin"><use href="#i-plotin"/></svg><span>Plot<br>In <i class="tri"></i></span></button>
            </div>
            <div class="group-name">Plot</div>
        </div>
        <div class="group group-add">
            <div class="group-body">
                <div class="col">
                    <button class="cmd"><svg class="ico-s"><use href="#i-volume"/></svg>Volume</button>
                    <button class="cmd"><svg class="ico-s"><use href="#i-arrowvol"/></svg>Arrow Volume</button>
                    <button class="cmd"><svg class="ico-s"><use href="#i-surface"/></svg>Surface</button>
                </div>
                <div class="col">
                    <button class="cmd"><svg class="ico-s"><use href="#i-slice"/></svg>Slice</button>
                    <button class="cmd"><svg class="ico-s"><use href="#i-iso"/></svg>Isosurface</button>
                    <button class="cmd"><svg class="ico-s"><use href="#i-arrowsurf"/></svg>Arrow Surface</button>
                </div>
                <div class="col">
                    <button class="cmd"><svg class="ico-s"><use href="#i-line"/></svg>Line</button>
                    <button class="cmd"><svg class="ico-s"><use href="#i-contour"/></svg>Contour</button>
                    <button class="cmd"><svg class="ico-s"><use href="#i-stream"/></svg>Streamline</button>
                </div>
                <div class="col">
                    <button class="cmd"><svg class="ico-s"><use href="#i-arrowline"/></svg>Arrow Line</button>
                    <button class="cmd"><svg class="ico-s"><use href="#i-meshplot"/></svg>Mesh</button>
                    <button class="cmd"><svg class="ico-s"><use href="#i-annot"/></svg>Annotation</button>
                </div>
                <button class="big"><svg class="big-cube"><use href="#i-bigcube"/></svg><span>More<br>Plots <i class="tri"></i></span></button>
            </div>
            <div class="group-name">Add Plot</div>
        </div>
        <div class="group group-attr">
            <div class="group-body">
                <div class="col">
                    <button class="cmd" disabled><svg class="ico-s"><use href="#i-palette"/></svg>Color Expression</button>
                    <button class="cmd" disabled><svg class="ico-s"><use href="#i-deform"/></svg>Deformation</button>
                    <button class="cmd" disabled><svg class="ico-s"><use href="#i-filter2"/></svg>Filter</button>
                </div>
                <div class="col">
                    <button class="cmd" disabled aria-label="Material Appearance"><svg class="ico-s"><use href="#i-bricks"/></svg></button>
                    <button class="cmd" disabled aria-label="Selection"><svg class="ico-s"><use href="#i-cubes"/></svg></button>
                    <button class="cmd" disabled aria-label="Transparency"><svg class="ico-s"><use href="#i-pinkbox"/></svg></button>
                </div>
                <button class="big"><svg class="big-cube"><use href="#i-bigcube"/></svg><span>More<br>Attributes <i class="tri"></i></span></button>
            </div>
            <div class="group-name">Attributes</div>
        </div>
        <div class="group group-select">
            <div class="group-body">
                <div class="col">
                    <button class="cmd cmd-on"><svg class="ico-s"><use href="#i-evaln"/></svg>Evaluate Along Normal</button>
                    <button class="cmd"><svg class="ico-s"><use href="#i-first"/></svg>First Point for Cut Line</button>
                    <button class="cmd"><svg class="ico-s"><use href="#i-second"/></svg>Second Point for Cut Line</button>
                </div>
                <div class="col">
                    <button class="cmd"><svg class="ico-s"><use href="#i-cutdir"/></svg>Cut Line Direction</button>
                    <button class="cmd"><svg class="ico-s"><use href="#i-cutnorm"/></svg>Cut Line Surface Normal</button>
                    <button class="cmd"><svg class="ico-s"><use href="#i-plane1"/></svg>First Point for Cut Plane Normal</button>
                </div>
                <div class="col">
                    <button class="cmd" aria-label="Second Point for Cut Plane Normal"><svg class="ico-s"><use href="#i-plane2"/></svg></button>
                    <button class="cmd" aria-label="Cut Plane Direction"><svg class="ico-s"><use href="#i-planedir"/></svg></button>
                    <button class="cmd" aria-label="Cut Plane Normal"><svg class="ico-s"><use href="#i-planenorm"/></svg></button>
                </div>
            </div>
            <div class="group-name">Select</div>
        </div>
        <div class="group">
            <div class="group-body">
                <div class="col">
                    <button class="cmd"><svg class="ico-s"><use href="#i-image"/></svg>Image</button>
                    <button class="cmd"><svg class="ico-s"><use href="#i-anim"/></svg>Animation <i class="tri"></i></button>
                </div>
            </div>
            <div class="group-name">Export</div>
        </div>
    </section>

    <main class="workspace">
        <!-- Model Builder -->
        <section class="panel panel-model">
            <div class="panel-head">
                <h2>Model Builder</h2>
                <div class="panel-ctl"><i class="tri tri-lg"></i><svg class="pin"><use href="#i-pin"/></svg></div>
            </div>
            <div class="model-tools">
                <button aria-label="Back"><svg class="ico-s"><use href="#i-left"/></svg></button>
                <button class="dim" aria-label="Forward"><svg class="ico-s"><use href="#i-right"/></svg></button>
                <button class="dim" aria-label="Move Up"><svg class="ico-s"><use href="#i-up"/></svg></button>
                <button aria-label="Move Down"><svg class="ico-s"><use href="#i-down"/></svg></button>
                <button aria-label="Show"><svg class="ico-s"><use href="#i-eye"/></svg></button>
                <button class="drop" aria-label="Collapse All"><svg class="ico-w"><use href="#i-listup"/></svg><i class="tri tri-lg"></i></button>
                <button class="drop" aria-label="Expand All"><svg class="ico-w"><use href="#i-listdown"/></svg><i class="tri tri-lg"></i></button>
                <button class="drop" aria-label="Node Text"><svg class="ico-w"><use href="#i-listcols"/></svg><i class="tri tri-lg"></i></button>
                <button class="drop" aria-label="Filter"><svg class="ico-w"><use href="#i-funnel"/></svg><i class="tri tri-lg"></i></button>
            </div>
            <div class="filter-row">
                <input type="text" placeholder="Type filter text" aria-label="Filter">
                <button aria-label="Refresh"><svg class="ico-s"><use href="#i-refresh"/></svg></button>
            </div>
            <div class="tree-box">
                <ul class="tree">
                    <li class="lv2"><b></b><svg><use href="#i-block"/></svg>Block 1 <em>(blk1)</em></li>
                    <li class="lv2"><b></b><svg><use href="#i-union"/></svg>Form Union <em>(fin)</em></li>
                    <li class="lv1"><b class="open"><svg><use href="#i-cv-down"/></svg></b><svg><use href="#i-mats"/></svg>Materials</li>
                    <li class="lv2 off"><b><svg><use href="#i-cv-right"/></svg></b><svg><use href="#i-brick"/></svg>Brick <em>(mat1)</em></li>
                    <li class="lv2"><b><svg><use href="#i-cv-right"/></svg></b><svg><use href="#i-copper"/></svg>Cu - Copper <em>(mat2)</em></li>
                    <li class="lv1"><b class="open"><svg><use href="#i-cv-down"/></svg></b><svg><use href="#i-heat"/></svg>Heat Transfer in Solids <em>(ht)</em></li>
                    <li class="lv2"><b></b><svg><use href="#i-dom"/></svg>Solid 1</li>
                    <li class="lv2"><b></b><svg><use href="#i-dom"/></svg>Initial Values 1</li>
                    <li class="lv2"><b></b><svg><use href="#i-bndd"/></svg>Thermal Insulation 1</li>
                    <li class="lv2"><b></b><svg><use href="#i-bnd"/></svg>Temperature 1</li>
                    <li class="lv2"><b></b><svg><use href="#i-bnd"/></svg>Heat Flux 1</li>
                    <li class="lv1"><b></b><svg><use href="#i-mesh"/></svg>Mesh 1</li>
                    <li class="lv0"><b><svg><use href="#i-cv-right"/></svg></b><svg><use href="#i-study"/></svg>Study 1</li>
                    <li class="lv0"><b class="open"><svg><use href="#i-cv-down"/></svg></b><svg><use href="#i-results"/></svg>Results</li>
                    <li class="lv1"><b class="open"><svg><use href="#i-cv-down"/></svg></b><svg><use href="#i-datasets"/></svg>Datasets</li>
                    <li class="lv2"><b></b><svg><use href="#i-solution"/></svg>Study 1/Solution 1 <em>(sol1)</em></li>
                    <li class="lv2"><b></b><svg><use href="#i-cutline"/></svg>Cut Line 3D 1</li>
                    <li class="lv1"><b></b><span class="num-icon">8.85<br>e-12</span>Derived Values</li>
                    <li class="lv1"><b></b><svg><use href="#i-tables"/></svg>Tables</li>
                    <li class="lv1 selected"><b><svg><use href="#i-cv-right"/></svg></b><svg><use href="#i-bigcube"/></svg>Temperature (ht)</li>
                </ul>
                <div class="scroll scroll-tree">
                    <svg><use href="#i-cv-up"/></svg>
                    <div class="track"><div class="thumb"></div></div>
                    <svg><use href="#i-cv-down"/></svg>
                </div>
            </div>
        </section>

        <!-- Settings -->
        <section class="panel panel-settings">
            <div class="panel-head">
                <h2>Settings</h2>
                <div class="panel-ctl"><i class="tri tri-lg"></i><svg class="pin"><use href="#i-pin"/></svg></div>
            </div>
            <h3>3D Plot Group</h3>
            <div class="set-tools">
                <button class="set-plot"><svg><use href="#i-plotwin"/></svg>Plot</button>
                <button aria-label="Plot First"><svg><use href="#i-first-arr"/></svg></button>
                <button aria-label="Plot Previous"><svg><use href="#i-prev"/></svg></button>
                <button class="dim" aria-label="Plot Next"><svg><use href="#i-next"/></svg></button>
                <button class="dim" aria-label="Plot Last"><svg><use href="#i-last-arr"/></svg></button>
            </div>
            <div class="set-scroll">
                <div class="set-body">
                    <div class="field field-label">
                        <label for="label">Label:</label>
                        <input type="text" id="label" value="Temperature (ht)">
                        <button class="sq" aria-label="Rename"><svg class="ico"><use href="#i-rename"/></svg></button>
                    </div>
                    <h4 class="sec"><i class="tw tw-open"></i>Data</h4>
                    <div class="sec-body sec-data">
                        <div class="field field-dataset">
                            <label for="dataset">Dataset:</label>
                            <div class="sel"><select id="dataset"><option>Study 1/Solution 1 (sol1)</option></select></div>
                            <button class="sq" aria-label="Go to Source"><svg class="ico"><use href="#i-goto"/></svg></button>
                        </div>
                        <div class="field field-dataset">
                            <label for="time">Time (s):</label>
                            <div class="sel"><select id="time"><option>1</option></select></div>
                        </div>
                    </div>
                    <h4 class="sec"><i class="tw"></i>Selection</h4>
                    <h4 class="sec"><i class="tw"></i>Title</h4>
                    <h4 class="sec"><i class="tw tw-open"></i>Plot Settings</h4>
                    <div class="sec-body">
                        <div class="field field-view">
                            <label for="view">View:</label>
                            <div class="sel"><select id="view"><option>Automatic</option></select></div>
                            <button class="sq" aria-label="Go to Source"><svg class="ico"><use href="#i-goto"/></svg></button>
                        </div>
                        <label class="check"><input type="checkbox">Show hidden entities</label>
                        <label class="check"><input type="checkbox">Propagate hiding to lower dimensions</label>
                        <fieldset>
                            <legend><label class="check"><input type="checkbox" checked>Plot dataset edges</label></legend>
                            <div class="field">
                                <label for="color">Color:</label>
                                <div class="sel"><select id="color"><option>From theme</option></select></div>
                            </div>
                            <div class="field">
                                <label for="frame">Frame:</label>
                                <div class="sel"><select id="frame"><option>Material&nbsp; (X, Y, Z)</option></select></div>
                            </div>
                        </fieldset>
                    </div>
                    <h4 class="sec"><i class="tw tw-open"></i>Color Legend</h4>
                </div>
                <div class="scroll scroll-set">
                    <svg><use href="#i-cv-up"/></svg>
                    <div class="track"><div class="thumb"></div></div>
                    <svg><use href="#i-cv-down"/></svg>
                </div>
            </div>
        </section>

        <div class="right-col">
            <!-- Graphics -->
            <section class="panel panel-graphics">
                <div class="panel-head">
                    <h2>Graphics</h2>
                    <div class="panel-ctl"><i class="tri tri-lg"></i><svg class="pin"><use href="#i-pin"/></svg></div>
                </div>
                <div class="gfx-tools">
                    <button aria-label="Zoom In"><svg class="ico"><use href="#i-zoomin"/></svg></button>
                    <button aria-label="Zoom Out"><svg class="ico"><use href="#i-zoomout"/></svg></button>
                    <button aria-label="Zoom Box"><svg class="ico"><use href="#i-zoombox"/></svg></button>
                    <button class="dd" aria-label="Zoom options"><i class="tri tri-lg"></i></button>
                    <button aria-label="Zoom Extents"><svg class="ico"><use href="#i-extents"/></svg></button>
                    <span class="bar"></span>
                    <button aria-label="Default View"><svg class="ico"><use href="#i-axes"/></svg></button>
                    <button class="dd" aria-label="View options"><i class="tri tri-lg"></i></button>
                    <button aria-label="XY View"><svg class="ico" viewBox="0 0 24 24"><use href="#i-xy"/><text class="axis-text" x="8" y="12">xy</text></svg></button>
                    <button aria-label="YZ View"><svg class="ico" viewBox="0 0 24 24"><use href="#i-yz"/><text class="axis-text" x="8" y="14">yz</text></svg></button>
                    <button aria-label="XZ View"><svg class="ico" viewBox="0 0 24 24"><use href="#i-xz"/><text class="axis-text" x="8" y="14">xz</text></svg></button>
                    <button aria-label="Camera"><svg class="ico"><use href="#i-cam"/></svg></button>
                    <span class="bar"></span>
                    <button aria-label="Rotate"><svg class="ico"><use href="#i-rot"/></svg></button>
                    <button class="dd" aria-label="Rotate options"><i class="tri tri-lg"></i></button>
                    <span class="bar"></span>
                    <button aria-label="Clipping"><svg class="ico"><use href="#i-clip"/></svg></button>
                    <button class="dd" aria-label="Clipping options"><i class="tri tri-lg"></i></button>
                    <span class="bar"></span>
                    <button class="on on-split" aria-label="Scene Light"><svg class="ico"><use href="#i-light"/></svg><span><i class="tri tri-lg"></i></span></button>
                    <button aria-label="Transparency"><svg class="ico"><use href="#i-transp"/></svg></button>
                    <button class="dd" aria-label="Transparency options"><i class="tri tri-lg"></i></button>
                    <button class="on" aria-label="Show Axis"><svg class="ico"><use href="#i-axbox"/></svg></button>
                    <button aria-label="Show Grid"><svg class="ico"><use href="#i-grid"/></svg></button>
                    <button class="on" aria-label="Show Legends"><svg class="ico"><use href="#i-legend"/></svg></button>
                </div>
                <div class="gfx-tools gfx-tools-2">
                    <button aria-label="Environment"><svg class="ico"><use href="#i-shutter"/></svg></button>
                    <button class="dd" aria-label="Environment options"><i class="tri tri-lg"></i></button>
                    <button aria-label="Image Snapshot"><svg class="ico"><use href="#i-camera"/></svg></button>
                    <button aria-label="Print"><svg class="ico"><use href="#i-print"/></svg></button>
                </div>
                <div class="canvas">
                    <svg class="plot" viewBox="0 0 778 526" role="img" aria-label="Volume: Temperature (K)">
                        <defs>
                            <linearGradient id="thermal" x1="0" y1="0" x2="0" y2="1">
                                <stop offset="0" stop-color="#fffff0"/>
                                <stop offset=".08" stop-color="#fbe89a"/>
                                <stop offset=".18" stop-color="#f8c644"/>
                                <stop offset=".27" stop-color="#faa334"/>
                                <stop offset=".36" stop-color="#f98244"/>
                                <stop offset=".45" stop-color="#ee6462"/>
                                <stop offset=".54" stop-color="#d84e7e"/>
                                <stop offset=".64" stop-color="#b5449a"/>
                                <stop offset=".72" stop-color="#943fa6"/>
                                <stop offset=".82" stop-color="#7036a6"/>
                                <stop offset=".9" stop-color="#573099"/>
                                <stop offset="1" stop-color="#432a82"/>
                            </linearGradient>
                        </defs>
                        <g transform="translate(0 4)">
                            <!-- block faces -->
                            <path d="M268 52L222 411l77 101 54-398z" fill="#ecdb96"/>
                            <path d="M268 52l29 3 89 61-33-2z" fill="#ecdb96"/>
                            <path d="M353 114l33 2-55 397-32-1z" fill="#ffffb2"/>
                            <!-- cold side -->
                            <path d="M294 55l88 61" fill="none" stroke="#f98244" stroke-width="2"/>
                            <path d="M296 55l88 61" fill="none" stroke="#8f3fa0" stroke-width="2"/>
                            <path d="M382 118L327 512" fill="none" stroke="#faa334" stroke-width="2"/>
                            <path d="M383.500 118L328.500 512" fill="none" stroke="#d84e7e" stroke-width="2"/>
                            <path d="M385 118L330 512" fill="none" stroke="#5a2f9c" stroke-width="2"/>
                            <path d="M268 52L222 411l77 101 54-398zM268 52l29 3 89 61-33-2M386 116l-55 397-32-1" fill="none" stroke="#111"/>
                            <!-- axes -->
                            <path d="M59 464l4-26" stroke="#d81b60" stroke-width="2"/>
                            <path d="M64 427l4 12-8-1z" fill="#d81b60"/>
                            <path d="M59 464l-28-2" stroke="#55a84a" stroke-width="3"/>
                            <path d="M22 461l12-4-1 9z" fill="#55a84a"/>
                            <path d="M59 464l5 5" stroke="#4a82c0" stroke-width="2"/>
                            <circle cx="66" cy="471" r="4" fill="#4a82c0"/>
                            <g class="plot-text">
                                <text x="60" y="420">x</text>
                                <text x="7" y="465">y</text>
                                <text x="68" y="482">z</text>
                                <text class="plot-title" x="24" y="39">Time=1 s</text>
                                <text class="plot-title" x="276" y="39">Volume: Temperature (K)</text>
                                <text x="709" y="104">295</text>
                                <text x="709" y="171">290</text>
                                <text x="709" y="238">285</text>
                                <text x="709" y="304">280</text>
                                <text x="709" y="371">275</text>
                                <text x="709" y="438">270</text>
                            </g>
                            <!-- colour bar -->
                            <rect x="674" y="98" width="23" height="372" fill="url(#thermal)" stroke="#555" stroke-width="1.500"/>
                            <path d="M674 165h5M692 165h5M674 231h5M692 231h5M674 298h5M692 298h5M674 365h5M692 365h5M674 432h5M692 432h5" stroke="#222" stroke-width="1.500"/>
                            <use href="#i-logo" x="740" y="8" width="32" height="32"/>
                        </g>
                    </svg>
                </div>
            </section>

            <!-- Messages -->
            <section class="panel panel-msg">
                <div class="msg-tabs">
                    <button class="msg-tab msg-on">Messages <span class="x">✕</span></button>
                    <button class="msg-tab">Progress</button>
                    <button class="msg-tab">Log</button>
                    <button class="msg-tab">Table <span class="x">✕</span></button>
                    <div class="panel-ctl"><i class="tri tri-lg"></i><svg class="pin"><use href="#i-pin"/></svg></div>
                </div>
                <div class="msg-tools">
                    <button aria-label="Clear"><svg class="ico"><use href="#i-broom"/></svg></button>
                    <button class="on" aria-label="Scroll lock"><svg class="ico"><use href="#i-mail"/></svg></button>
                </div>
            </section>
        </div>
    </main>

    <div class="status">1.45 GB | 1.36 GB</div>

    <footer class="taskbar">
        <div class="weather"><svg viewBox="0 0 48 44"><circle cx="16" cy="27" r="15" fill="url(#g-sun)"/></svg><span>95°</span></div>
        <div class="apps">
            <button aria-label="Start"><svg><use href="#t-win"/></svg></button>
            <button aria-label="Search"><svg><use href="#t-search"/></svg></button>
            <button aria-label="Task View"><svg><use href="#t-views"/></svg></button>
            <button aria-label="Edge"><svg><use href="#t-edge"/></svg></button>
            <button class="running" aria-label="File Explorer"><svg><use href="#t-folder"/></svg></button>
            <button aria-label="Photos"><svg><use href="#t-photo"/></svg></button>
            <button aria-label="Store"><svg><use href="#t-store"/></svg></button>
            <button aria-label="Chrome"><svg><use href="#t-chrome"/></svg></button>
            <button aria-label="WhatsApp"><svg><use href="#t-wa"/></svg></button>
            <button aria-label="MATLAB"><svg><use href="#t-matlab"/></svg></button>
            <button class="running current" aria-label="COMSOL"><svg><use href="#i-logo"/></svg></button>
            <button aria-label="SolidWorks"><svg viewBox="0 0 36 36"><use href="#t-sw"/><text class="sw-name" x="4" y="22">SW</text><text class="sw-year" x="13" y="35">2023</text></svg></button>
            <button aria-label="Notepad"><svg><use href="#t-note"/></svg></button>
            <button aria-label="Mendeley"><svg><use href="#t-mend"/></svg></button>
            <button class="running" aria-label="Chrome profile"><svg><use href="#t-chromeuser"/></svg></button>
            <button class="running" aria-label="Word"><svg viewBox="0 0 36 36"><use href="#t-word"/><text class="word-w" x="3" y="23">W</text></svg></button>
        </div>
        <div class="tray">
            <svg class="tray-cv"><use href="#i-cv-up"/></svg>
            <svg class="ico tray-cloud"><use href="#t-cloud"/></svg>
            <div class="lang">ENG<br>IN</div>
            <div class="net">
                <svg class="ico"><use href="#t-wifi"/></svg>
                <svg class="ico"><use href="#t-vol"/></svg>
                <svg class="ico"><use href="#t-bat"/></svg>
            </div>
            <div class="clock">4:19 PM<br>7/2/2024</div>
            <svg class="ico"><use href="#t-bell"/></svg>
            <svg class="copilot" viewBox="0 0 36 36"><use href="#t-copilot"/><text class="pre" x="12" y="33">PRE</text></svg>
        </div>
    </footer>
</body>
</html>
```

FILE: styles.css
```css
* {
    box-sizing: border-box;
}
body {
    margin: 0;
    min-height: 100vh;
    display: flex;
    flex-direction: column;
    background: #fafbff;
    color: #000;
    font-family: "Open Sans", "Noto Sans", sans-serif;
    font-size: 17px;
    line-height: 20px;
}
button {
    margin: 0;
    padding: 0;
    border: 0;
    background: none;
    color: inherit;
    font: inherit;
    cursor: pointer;
}
svg {
    display: block;
    flex: none;
}
h2, h3, h4, ul {
    margin: 0;
    padding: 0;
    font-weight: normal;
}
.icon-defs {
    position: absolute;
    width: 0;
    height: 0;
}
.ico {
    width: 24px;
    height: 24px;
}
.ico-s {
    width: 22px;
    height: 22px;
}
.ico-w {
    width: 26px;
    height: 20px;
}

/* Down arrow */
.tri {
    display: inline-block;
    flex: none;
    width: 8px;
    height: 5px;
    vertical-align: middle;
    background: currentColor;
    clip-path: polygon(0 0, 100% 0, 50% 100%);
}
.tri-lg {
    width: 12px;
    height: 7px;
}
.tri-dim {
    opacity: .35;
}

/* Title bar */
.titlebar {
    display: flex;
    align-items: center;
    height: 28px;
    padding-left: 2px;
    background: #ff4444;
}
.title-sep {
    width: 4px;
    height: 20px;
    margin: 0 8px 0 10px;
    border-radius: 2px;
    background: #ff8c8c;
}
.quick {
    display: flex;
    gap: 9px;
}
.quick-edit {
    margin-left: 17px;
}
.quick button {
    display: flex;
    align-items: center;
    justify-content: center;
    min-width: 29px;
    height: 28px;
    background: radial-gradient(circle 19px, rgba(255, 255, 255, .85) 30%, rgba(255, 255, 255, 0));
}
.quick .ico {
    width: 22px;
    height: 22px;
}
.quick .split {
    gap: 8px;
    background: radial-gradient(circle 17px at 11px 14px, rgba(255, 255, 255, .85) 30%, rgba(255, 255, 255, 0));
}
.quick-edit .split {
    gap: 14px;
    padding-left: 3px;
    background: radial-gradient(circle 17px at 14px 14px, rgba(255, 255, 255, .85) 30%, rgba(255, 255, 255, 0));
}
.title-text {
    margin-left: auto;
    margin-right: 286px;
    line-height: 28px;
    background: rgba(255, 255, 255, .35);
    box-shadow: 0 0 6px 2px rgba(255, 255, 255, .35);
}
.win-controls {
    display: flex;
    margin-right: 2px;
}
.win-controls button {
    width: 70px;
    height: 28px;
}
.win-controls svg {
    width: 15px;
    height: 15px;
    margin: 0 auto;
    fill: none;
    stroke: #fff;
    stroke-width: 1.3;
}

/* Ribbon tabs */
.tabs {
    display: flex;
    margin: 4px 5px 0;
    height: 37px;
    padding: 2px 7px 0 1px;
    background: #ebecee;
}
.tab {
    padding: 2px 13px 0;
    height: 35px;
}
.tab-file {
    width: 82px;
    height: 32px;
    padding-top: 4px;
    margin-right: 4px;
    background: #348ccb;
    color: #fff;
}
.tab-active {
    background: #fafbff;
    color: #348ccb;
}
.help {
    width: 18px;
    height: 17px;
    margin: 7px 0 0 auto;
    background: #348ccb;
    color: #fff;
    font-size: 13px;
    line-height: 16px;
}

/* Ribbon */
.ribbon {
    display: flex;
    margin: 0 5px;
    height: 136px;
    padding: 7px 0 0 2px;
    border: 2px solid #d5d5d9;
    border-top: 0;
}
.group {
    position: relative;
    display: flex;
    flex-direction: column;
    padding: 0 18px 0 17px;
}
.group::after {
    content: "";
    position: absolute;
    right: 0;
    top: 4px;
    width: 2px;
    height: 112px;
    background: #d8d9dc;
}
.group-plot {
    padding: 0 21px 0 17px;
}
.group-attr {
    padding-left: 15px;
}
.group-select {
    padding: 0 8px 0 10px;
}
.group-body {
    display: flex;
    gap: 14px;
    height: 104px;
}
.group-attr .group-body {
    gap: 12px;
}
.group-select .group-body {
    gap: 2px;
}
.group-name {
    text-align: center;
    color: #6d6e70;
}
.col {
    display: flex;
    flex-direction: column;
    align-items: flex-start;
    gap: 3px;
}
.cmd {
    display: flex;
    align-items: center;
    gap: 4px;
    height: 30px;
    white-space: nowrap;
}
.group-select .cmd {
    padding: 0 6px;
}
.cmd-on {
    background: #bcdffb;
    box-shadow: inset 0 0 0 2px #9bcffa;
}
.cmd:disabled {
    color: #b4b5b8;
}
.big {
    display: flex;
    flex-direction: column;
    align-items: center;
    gap: 7px;
    min-width: 46px;
    padding-top: 8px;
}
.big-plot {
    width: 38px;
    height: 36px;
}
.big-plotin {
    width: 48px;
    height: 38px;
}
.big-cube {
    width: 40px;
    height: 38px;
}

/* Workspace */
.workspace {
    flex: 1;
    display: grid;
    grid-template-columns: 486fr 626fr 784fr;
    gap: 8px;
    padding: 6px 5px 0 4px;
}
.panel {
    display: flex;
    flex-direction: column;
    min-width: 0;
    border: 2px solid #d5d5d9;
    background: #fafbff;
}
.panel-model {
    border-color: #9bcffa;
    padding: 0 8px 11px;
}
.panel-head {
    display: flex;
    justify-content: space-between;
    align-items: center;
    height: 50px;
    padding: 6px 5px 0 10px;
}
.panel-model .panel-head {
    padding: 6px 0 0 3px;
}
.panel-graphics .panel-head {
    height: 47px;
    padding-top: 8px;
}
h2 {
    font-size: 30px;
    font-weight: 300;
    line-height: 40px;
    color: #2b579a;
}
.panel-model h2 {
    color: #1e90f0;
}
.panel-ctl {
    display: flex;
    align-items: center;
    gap: 11px;
    padding-bottom: 5px;
    color: #55565a;
}
.panel-model .panel-ctl {
    color: #348ccb;
    margin-right: -2px;
}
.pin {
    width: 12px;
    height: 18px;
}

/* Model Builder */
.model-tools {
    display: flex;
    align-items: center;
    gap: 12px;
    height: 26px;
    padding-left: 1px;
    color: #348ccb;
}
.model-tools .dim {
    color: #98999c;
}
.model-tools .drop {
    display: flex;
    align-items: center;
    gap: 10px;
}
.drop .tri {
    background: #000;
}
.filter-row {
    display: flex;
    align-items: center;
    gap: 14px;
    margin: 11px 0 9px;
    padding-right: 5px;
}
input[type="text"] {
    flex: 1;
    min-width: 0;
    height: 32px;
    padding: 0 2px;
    border: 2px solid #d5d5d9;
    background: #fff;
    font: inherit;
}
input::placeholder {
    color: #97989b;
    opacity: 1;
}
.tree-box {
    flex: 1;
    display: flex;
    border: 1px solid #d5d5d9;
    background: #fff;
}
.tree {
    flex: 1;
    list-style: none;
    padding: 2px 0 1px 1px;
}
.tree li {
    display: flex;
    align-items: center;
    height: 30px;
    white-space: pre;
}
.tree li > svg {
    width: 24px;
    height: 22px;
    margin: 0 9px 0 6px;
}
.tree b {
    width: 20px;
    height: 14px;
    padding-left: 3px;
    color: #6d6e70;
}
.tree b svg {
    width: 16px;
    height: 14px;
}
.tree .open {
    color: #000;
}
.lv0 { padding-left: 34px; }
.lv1 { padding-left: 64px; }
.lv2 { padding-left: 94px; }
.tree .off {
    color: #6d6e70;
}
.tree .selected {
    background: #bfe1fd;
}
.num-icon {
    width: 32px;
    margin-right: 7px;
    padding-left: 8px;
    font-size: 8px;
    font-weight: 600;
    line-height: 8px;
    color: #b455a0;
    white-space: nowrap;
}

/* Scroll bars */
.scroll {
    display: flex;
    flex-direction: column;
    width: 26px;
    background: #f7f8fa;
    color: #c3c4c8;
}
.scroll svg {
    width: 12px;
    height: 26px;
    margin: 0 auto;
}
.track {
    flex: 1;
    display: flex;
    flex-direction: column;
    background: #fdfdff;
}
.thumb {
    background: #e4e5e8;
}
.scroll-tree .thumb {
    margin-top: 125px;
    height: 354px;
}
.scroll-set .thumb {
    height: 374px;
}

/* Settings */
h3 {
    padding-left: 10px;
    font-size: 21px;
    line-height: 32px;
    font-weight: 300;
    color: #2b579a;
    margin-top: 2px;
}
.set-tools {
    display: flex;
    align-items: center;
    gap: 13px;
    height: 34px;
    padding: 0 0 4px 11px;
    color: #b455a0;
}
.set-tools .dim {
    color: #858689;
}
.set-tools svg {
    width: 20px;
    height: 18px;
}
.set-plot {
    display: flex;
    align-items: center;
    gap: 9px;
    color: #000;
}
.set-scroll {
    flex: 1;
    display: flex;
}
.set-body {
    flex: 1;
    min-width: 0;
}
.field {
    display: flex;
    align-items: center;
    min-height: 32px;
}
.field-label {
    margin: 14px 7px 14px 8px;
}
.field-label label {
    width: 60px;
}
.field-label input {
    padding: 0 4px;
}
.sq {
    display: flex;
    align-items: center;
    justify-content: center;
    width: 31px;
    height: 34px;
    margin-left: 12px;
    border: 2px solid #d5d5d9;
    border-radius: 4px;
    background: #f0f0f1;
}
.sq .ico {
    width: 21px;
    height: 22px;
}
.sec {
    display: flex;
    align-items: center;
    gap: 18px;
    height: 40px;
    margin-bottom: 2px;
    padding-left: 7px;
    background: #dee9f5;
    font-size: 18px;
}
.tw {
    width: 14px;
    height: 14px;
    background: #8b8f95;
    clip-path: polygon(3px 0, 11px 50%, 3px 100%, 3px 0, 4px 2px, 4px 12px, 9px 50%, 4px 2px);
}
.tw-open {
    height: 8px;
    background: #434548;
    clip-path: polygon(0 0, 100% 0, 50% 100%);
}
.sec-body {
    padding: 13px 7px 15px 8px;
}
.sec-data {
    padding: 11px 7px 15px 8px;
}
.field-dataset label {
    width: 80px;
}
.field-dataset + .field-dataset {
    margin-top: 9px;
}
.field-view label {
    width: 56px;
}
.sel {
    position: relative;
    flex: 1;
}
.sel::after {
    content: "";
    position: absolute;
    right: 10px;
    top: 13px;
    width: 12px;
    height: 7px;
    background: #000;
    clip-path: polygon(0 0, 100% 0, 50% 100%);
    pointer-events: none;
}
select {
    display: block;
    width: 100%;
    height: 32px;
    padding: 0 18px;
    border: 2px solid #d5d5d9;
    border-radius: 4px;
    background: linear-gradient(#f1f1f2, #e8e8e9);
    color: #000;
    font: inherit;
    appearance: none;
}
.check {
    display: flex;
    align-items: center;
    gap: 7px;
    height: 32px;
    padding-left: 2px;
}
.field-view {
    margin-bottom: 4px;
}
.check input {
    display: grid;
    place-items: center;
    width: 22px;
    height: 21px;
    margin: 0;
    border: 2px solid #6d6e70;
    background: #f1f1f2;
    appearance: none;
}
.check input:checked::after {
    content: "";
    width: 16px;
    height: 15px;
    background: #222;
    clip-path: polygon(0 50%, 20% 45%, 40% 72%, 82% 0, 100% 5%, 46% 100%, 36% 100%);
}
fieldset {
    margin: 5px -1px 0 -4px;
    padding: 9px 10px 7px 12px;
    border: 2px solid #d5d5d9;
}
legend {
    margin-left: -6px;
    padding: 0 6px 0 3px;
}
legend .check {
    height: 24px;
}
fieldset .field label {
    width: 68px;
}
fieldset .field + .field {
    margin-top: 10px;
}

/* Graphics */
.right-col {
    display: flex;
    flex-direction: column;
    gap: 8px;
    min-width: 0;
}
.panel-graphics {
    flex: 1;
}
.gfx-tools {
    display: flex;
    align-items: center;
    height: 31px;
    padding-left: 5px;
}
.gfx-tools button,
.msg-tools button {
    display: flex;
    align-items: center;
    justify-content: center;
    flex: none;
    width: 34px;
    height: 31px;
}
.gfx-tools .ico {
    width: 22px;
    height: 22px;
}
.gfx-tools .dd {
    width: 25px;
    padding-right: 3px;
}
.bar {
    width: 2px;
    height: 24px;
    margin: 0 6px;
    background: #d5d5d9;
}
.axis-text {
    font-size: 11px;
    fill: #777;
}
.gfx-tools .on,
.msg-tools .on {
    width: 31px;
    margin: 0 2px;
    border: 2px solid #1e90f0;
    border-radius: 4px;
    background: #9fd1fb;
}
.gfx-tools .on-split {
    width: 59px;
    margin: 0 3px 0 0;
    gap: 4px;
}
.on-split span {
    display: flex;
    align-items: center;
    height: 23px;
    padding-left: 7px;
    border-left: 2px solid #1e90f0;
}
.canvas {
    flex: 1;
    min-height: 0;
    background: linear-gradient(#fafbff 8%, #eff6ff 60%, #e4f1ff);
}
.plot {
    width: 100%;
    height: 100%;
}
.plot-text {
    font-family: "DejaVu Sans", sans-serif;
    font-size: 17px;
}
.plot-title {
    font-size: 18px;
}

/* Messages */
.msg-tabs {
    display: flex;
    align-items: flex-end;
    gap: 12px;
    height: 47px;
    padding-left: 6px;
    border-bottom: 2px solid #d5d5d9;
}
.msg-tabs .panel-ctl {
    margin: 0 5px 0 auto;
    padding-bottom: 3px;
}
.msg-tab {
    height: 37px;
    padding: 2px 7px 0;
    background: #ebebeb;
    font-size: 18px;
}
.msg-on {
    height: 39px;
    margin-bottom: -2px;
    padding-top: 4px;
    border: 2px solid #d5d5d9;
    border-bottom: 0;
    background: #fafbff;
    color: #2b579a;
}
.x {
    margin: 0 1px 0 6px;
    font-size: 18px;
    line-height: 18px;
    color: #cdd3dc;
}
.msg-tools {
    display: flex;
    height: 49px;
    padding: 10px 0 0 4px;
}
.status {
    height: 49px;
    padding: 21px 0 0 14px;
    text-align: center;
    font-size: 16px;
}

/* Taskbar */
.taskbar {
    display: flex;
    height: 72px;
    border-top: 2px solid #8e3237;
    background: linear-gradient(90deg, #920a0f, #a80e10 50%, #9c0c12 75%, #8e0b0f);
    color: #fff;
}
.weather {
    position: relative;
    flex: 1 1 285px;
    padding: 9px 0 0 32px;
}
.weather svg {
    width: 48px;
    height: 44px;
}
.weather span {
    position: absolute;
    left: 42px;
    top: 8px;
    width: 36px;
    height: 24px;
    border-radius: 12px;
    background: #33302f;
    font-size: 16px;
    line-height: 24px;
    text-align: center;
}
.apps {
    display: flex;
    gap: 6px;
    padding-top: 4px;
}
.apps button {
    position: relative;
    width: 60px;
    height: 60px;
    border-radius: 6px;
}
.apps svg {
    width: 36px;
    height: 36px;
    margin: 0 auto;
}
.apps .running::after {
    content: "";
    position: absolute;
    left: 26px;
    bottom: 0;
    width: 8px;
    height: 5px;
    border-radius: 3px;
    background: #d48f92;
}
.apps .current {
    background: #b02528;
    box-shadow: inset 0 0 0 1px #bd3c3e;
}
.apps .current::after {
    left: 18px;
    width: 24px;
    background: #ff8078;
}
.sw-name,
.sw-year,
.word-w,
.pre {
    font-weight: bold;
    fill: #fff;
}
.sw-name {
    font-size: 16px;
}
.sw-year {
    font-size: 9px;
}
.word-w {
    font-size: 13px;
}
.pre {
    font-size: 10px;
    fill: #222;
}
.tray {
    flex: 1 1 580px;
    display: flex;
    align-items: center;
    justify-content: flex-end;
    padding: 0 29px 2px 0;
}
.tray-cv {
    width: 20px;
    height: 18px;
    margin-right: 26px;
}
.lang {
    margin: 0 28px 0 27px;
    text-align: center;
    line-height: 23px;
}
.net {
    display: flex;
    gap: 12px;
}
.clock {
    margin: 0 10px 0 28px;
    text-align: right;
    line-height: 24px;
}
.copilot {
    width: 36px;
    height: 36px;
    margin-left: 24px;
}
```
